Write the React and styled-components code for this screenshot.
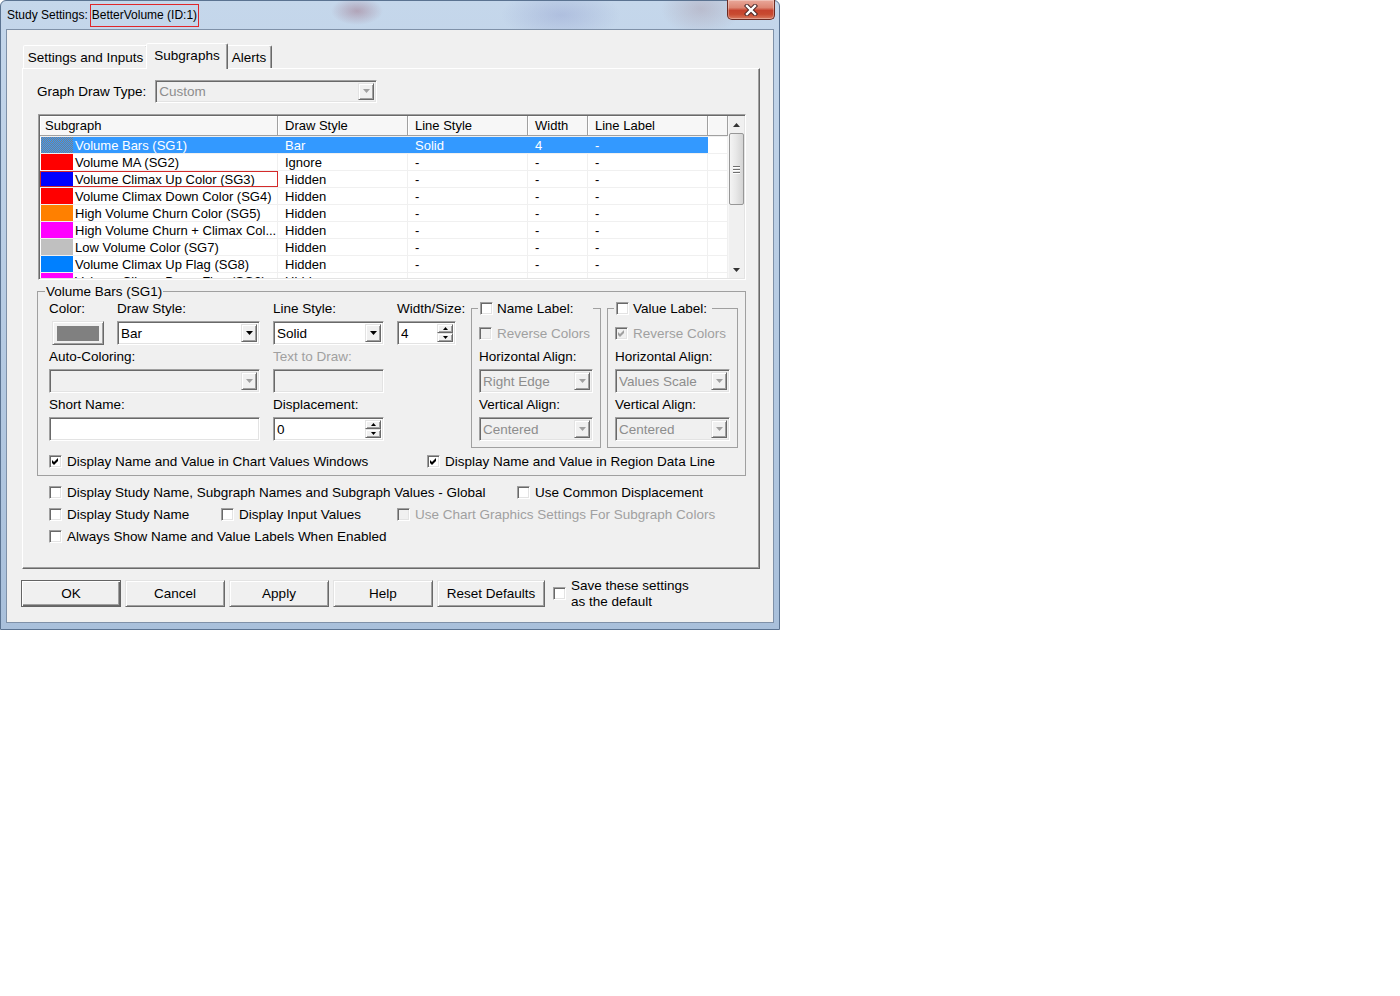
import React from "react";
import styled, { createGlobalStyle, css } from "styled-components";

const GlobalStyle = createGlobalStyle`
  html, body {
    margin: 0;
    padding: 0;
    background: #ffffff;
  }
  body {
    font-family: "Liberation Sans", Arial, sans-serif;
    font-size: 13.5px;
    color: #000;
  }
  *, *::before, *::after {
    box-sizing: border-box;
  }
`;

// classic 3d borders
const sunken = css`
  border: 1px solid;
  border-color: #a0a0a0 #ffffff #ffffff #a0a0a0;
  box-shadow: inset 1px 1px 0 #696969, inset -1px -1px 0 #e3e3e3;
`;

const raised = css`
  border: 1px solid;
  border-color: #e3e3e3 #696969 #696969 #e3e3e3;
  box-shadow: inset 1px 1px 0 #ffffff, inset -1px -1px 0 #a0a0a0;
`;

const Window = styled.div`
  width: 780px;
  height: 630px;
  display: flex;
  flex-direction: column;
  padding: 0 5px 6px 5px;
  border: 1px solid #5b7391;
  border-radius: 6px 6px 0 0;
  background:
    radial-gradient(ellipse 26px 14px at 356px 10px, rgba(140, 70, 90, 0.35), transparent),
    radial-gradient(ellipse 60px 26px at 560px 14px, rgba(110, 120, 185, 0.25), transparent),
    radial-gradient(ellipse 40px 26px at 700px 8px, rgba(150, 110, 120, 0.25), transparent),
    linear-gradient(180deg, #c5d7eb 0%, #b5cae2 55%, #a9c0db 100%);
`;

const TitleBar = styled.div`
  height: 28px;
  display: flex;
  align-items: center;
  padding-left: 1px;
  font-size: 12px;
`;

const TitleText = styled.span`
  white-space: nowrap;
`;

const TitleMark = styled.span`
  margin-left: 2px;
  height: 23px;
  line-height: 21px;
  padding: 0 1px;
  border: 1px solid #e0262a;
  white-space: nowrap;
`;

const CloseButton = styled.div`
  align-self: flex-start;
  margin: -1px -1px 0 auto;
  width: 48px;
  height: 20px;
  border: 1px solid #6b2a22;
  border-top: none;
  border-radius: 0 0 5px 5px;
  background: linear-gradient(180deg, #e9a89a 0%, #dd8673 40%, #c6432e 55%, #c84a30 75%, #d97a60 100%);
  box-shadow: inset 0 0 0 1px rgba(255, 255, 255, 0.3);
  display: flex;
  align-items: center;
  justify-content: center;
`;

const Client = styled.div`
  flex: 1;
  display: flex;
  flex-direction: column;
  background: #f0f0f0;
  border: 1px solid #7f91a8;
  padding: 13px 13px 0 15px;
`;

const TabRow = styled.div`
  display: flex;
  align-items: flex-end;
  height: 25px;
  margin-left: 1px;
`;

const Tab = styled.div`
  position: relative;
  z-index: ${(p) => (p.$active ? 1 : 0)};
  width: ${(p) => p.$w}px;
  height: ${(p) => (p.$active ? 26 : 23)}px;
  margin: ${(p) => (p.$active ? "0 -2px -1px -2px" : "0")};
  padding-bottom: ${(p) => (p.$active ? 2 : 0)}px;
  display: flex;
  align-items: center;
  justify-content: center;
  background: #f0f0f0;
  border: 1px solid;
  border-bottom: none;
  border-color: #ffffff #696969 transparent #ffffff;
  border-radius: 2px 2px 0 0;
  box-shadow: inset -1px 0 0 #a0a0a0;
  white-space: nowrap;
`;

const Panel = styled.div`
  height: 501px;
  display: flex;
  flex-direction: column;
  padding: 10px 0 0 14px;
  border: 1px solid;
  border-color: #ffffff #696969 #696969 #ffffff;
  box-shadow: inset -1px -1px 0 #a0a0a0;
`;

const DrawTypeRow = styled.div`
  display: flex;
  align-items: center;
  gap: 9px;
  height: 23px;
  padding-top: 1px;
`;

const Combo = styled.div`
  ${sunken};
  width: ${(p) => (p.$w ? `${p.$w}px` : "100%")};
  height: ${(p) => p.$h || 24}px;
  display: flex;
  align-items: stretch;
  padding: 2px 2px 2px 3px;
  background: ${(p) => (p.$disabled ? "#f0f0f0" : "#ffffff")};
  color: ${(p) => (p.$disabled ? "#8d8d8d" : "#000")};
`;

const ComboValue = styled.span`
  flex: 1;
  display: flex;
  align-items: center;
  white-space: nowrap;
  overflow: hidden;
`;

const ArrowButton = styled.div`
  ${raised};
  width: 16px;
  flex-shrink: 0;
  display: flex;
  align-items: center;
  justify-content: center;
  background: #f0f0f0;
`;

const SpinButtons = styled.div`
  width: 16px;
  flex-shrink: 0;
  display: flex;
  flex-direction: column;
`;

const SpinButton = styled.div`
  ${raised};
  flex: 1;
  display: flex;
  align-items: center;
  justify-content: center;
  background: #f0f0f0;
`;

const ListView = styled.div`
  ${sunken};
  margin: 12px 0 0 1px;
  width: 708px;
  height: 166px;
  padding: 1px;
  background: #ffffff;
  display: flex;
  overflow: hidden;
  font-size: 13px;
`;

const ListTable = styled.div`
  flex: 1;
  display: flex;
  flex-direction: column;
  overflow: hidden;
`;

const HeaderRow = styled.div`
  display: flex;
  height: 20px;
  flex-shrink: 0;
`;

const HeaderCell = styled.div`
  width: ${(p) => p.$w}px;
  flex-shrink: 0;
  display: flex;
  align-items: center;
  padding: 0 0 1px ${(p) => p.$pl ?? 7}px;
  background: #f7f7f7;
  border-right: 1px solid #a0a0a0;
  border-bottom: 1px solid #a0a0a0;
  box-shadow: inset 1px 1px 0 #ffffff;
  white-space: nowrap;
  overflow: hidden;
`;

const Row = styled.div`
  display: flex;
  height: 17px;
  flex-shrink: 0;
  border-top: 1px solid #f0f0f0;
`;

const NameCell = styled.div`
  width: 238px;
  flex-shrink: 0;
  display: flex;
  align-items: stretch;
  border-right: 1px solid ${(p) => (p.$sel ? "#3399ff" : "#f0f0f0")};
  outline: ${(p) => (p.$focus ? "1px solid #d42a2a" : "none")};
  outline-offset: -1px;
`;

const Swatch = styled.div`
  width: 32px;
  margin-left: 1px;
  flex-shrink: 0;
  background: ${(p) => p.$color};
`;

const selectedSwatch =
  "repeating-conic-gradient(#808080 0 25%, #3399ff 0 50%) 0 0 / 2px 2px";

const NameText = styled.div`
  flex: 1;
  display: flex;
  align-items: center;
  padding-left: 2px;
  white-space: nowrap;
  overflow: hidden;
  background: ${(p) => (p.$sel ? "#3399ff" : "transparent")};
  color: ${(p) => (p.$sel ? "#ffffff" : "#000")};
`;

const DataCell = styled.div`
  width: ${(p) => p.$w}px;
  flex-shrink: 0;
  display: flex;
  align-items: center;
  padding-left: 7px;
  border-right: 1px solid ${(p) => (p.$sel ? "#3399ff" : "#f0f0f0")};
  background: ${(p) => (p.$sel ? "#3399ff" : "transparent")};
  color: ${(p) => (p.$sel ? "#ffffff" : "#000")};
  white-space: nowrap;
  overflow: hidden;
`;

const ScrollBar = styled.div`
  width: 16px;
  flex-shrink: 0;
  display: flex;
  flex-direction: column;
  background: #f0f0f0;
  border-left: 1px solid #f7f7f7;
`;

const ScrollArrow = styled.div`
  height: 17px;
  flex-shrink: 0;
  display: flex;
  align-items: center;
  justify-content: center;
`;

const Thumb = styled.div`
  height: 72px;
  flex-shrink: 0;
  border: 1px solid #979797;
  border-radius: 2px;
  background: linear-gradient(90deg, #f4f4f4 0%, #e8e8e8 45%, #d4d4d4 100%);
  display: flex;
  flex-direction: column;
  align-items: center;
  justify-content: center;
  gap: 2px;
`;

const Grip = styled.div`
  width: 7px;
  height: 1px;
  background: #6f6f6f;
  box-shadow: 0 1px 0 #ffffff;
`;

const Track = styled.div`
  flex: 1;
`;

const GroupBox = styled.fieldset`
  margin: 4px 0 0 0;
  width: 709px;
  padding: 2px 7px 6px 11px;
  border: 1px solid #a0a0a0;
  min-inline-size: auto;
`;

const GroupLegend = styled.legend`
  margin-left: -4px;
  padding: 0 1px;
  height: 15px;
  line-height: 15px;
`;

const TopArea = styled.div`
  display: flex;
  align-items: flex-start;
`;

const FieldGrid = styled.div`
  display: grid;
  grid-template-columns: 55px 143px 111px 59px;
  column-gap: 13px;
  row-gap: 4px;
`;

const Field = styled.div`
  display: flex;
  flex-direction: column;
  gap: 5px;
  grid-column: ${(p) => p.$span || "auto"};
  margin-top: ${(p) => p.$mt || 0}px;
`;

const Label = styled.div`
  height: 15px;
  line-height: 16px;
  white-space: nowrap;
  color: ${(p) => (p.$disabled ? "#a0a0a0" : "#000")};
`;

const ColorButton = styled.div`
  ${raised};
  margin-left: 3px;
  width: 52px;
  height: 24px;
  padding: 4px 4px 3px 4px;
  background: #f0f0f0;
`;

const ColorFill = styled.div`
  width: 100%;
  height: 100%;
  background: ${(p) => p.$color};
`;

const Edit = styled.div`
  ${sunken};
  width: 100%;
  height: 24px;
  display: flex;
  align-items: stretch;
  padding: 2px 2px 2px 3px;
  background: ${(p) => (p.$disabled ? "#f0f0f0" : "#ffffff")};
`;

const SubGroup = styled.fieldset`
  margin: 0 0 0 ${(p) => p.$ml}px;
  width: ${(p) => p.$w}px;
  padding: 0 7px 6px 7px;
  border: 1px solid #a0a0a0;
  min-inline-size: auto;
  display: flex;
  flex-direction: column;
`;

const SubLegend = styled.legend`
  margin-left: -1px;
  padding: 0 ${(p) => p.$pr}px 0 2px;
  height: 15px;
  display: flex;
  align-items: center;
  gap: 4px;
  white-space: nowrap;
`;

const CheckItem = styled.div`
  display: flex;
  align-items: center;
  gap: 5px;
  height: 15px;
  flex-shrink: 0;
  width: ${(p) => (p.$w ? `${p.$w}px` : "auto")};
  margin-top: ${(p) => p.$mt || 0}px;
  margin-left: ${(p) => p.$ml || 0}px;
  color: ${(p) => (p.$disabled ? "#a0a0a0" : "#000")};
  white-space: nowrap;
`;

const Box = styled.div`
  ${sunken};
  width: 13px;
  height: 13px;
  flex-shrink: 0;
  display: flex;
  align-items: center;
  justify-content: center;
  background: ${(p) => (p.$disabled ? "#f0f0f0" : "#ffffff")};
`;

const CheckRow = styled.div`
  display: flex;
  align-items: center;
  height: ${(p) => p.$h || 15}px;
  margin-top: ${(p) => p.$mt || 0}px;
`;

const GlobalChecks = styled.div`
  margin-top: 5px;
  padding-left: 12px;
  display: flex;
  flex-direction: column;
`;

const ButtonRow = styled.div`
  margin: 11px 0 0 -1px;
  height: 27px;
  display: flex;
  align-items: center;
  gap: 4px;
`;

const Button = styled.div`
  width: ${(p) => p.$w || 100}px;
  height: 27px;
  display: flex;
  align-items: center;
  justify-content: center;
  background: #f0f0f0;
  border: 1px solid;
  ${(p) =>
    p.$default
      ? css`
          border-color: #646464;
          box-shadow: inset 1px 1px 0 #ffffff, inset -1px -1px 0 #696969, inset -2px -2px 0 #a0a0a0;
        `
      : css`
          border-color: #e3e3e3 #696969 #696969 #e3e3e3;
          box-shadow: inset 1px 1px 0 #ffffff, inset -1px -1px 0 #a0a0a0;
        `}
`;

const SaveText = styled.div`
  line-height: 16px;
  margin-left: 1px;
`;

const Triangle = ({ dir = "down", color = "#000", w = 7, h = 4 }) => (
  <svg width={w} height={h} viewBox={`0 0 ${w} ${h}`}>
    <polygon
      points={dir === "down" ? `0,0 ${w},0 ${w / 2},${h}` : `0,${h} ${w},${h} ${w / 2},0`}
      fill={color}
    />
  </svg>
);

const CheckMark = ({ color }) => (
  <svg width="9" height="9" viewBox="0 0 9 9">
    <polygon points="1,3 3,5 7,1 7,4 3,8 1,6" fill={color} />
  </svg>
);

const Check = ({ checked, disabled, w, mt, ml, children }) => (
  <CheckItem $w={w} $mt={mt} $ml={ml} $disabled={disabled}>
    <Box $disabled={disabled}>{checked && <CheckMark color={disabled ? "#a0a0a0" : "#000"} />}</Box>
    {children && <span>{children}</span>}
  </CheckItem>
);

const Dropdown = ({ value, disabled, w, h }) => (
  <Combo $w={w} $h={h} $disabled={disabled}>
    <ComboValue>{value}</ComboValue>
    <ArrowButton>
      <Triangle color={disabled ? "#a0a0a0" : "#000"} />
    </ArrowButton>
  </Combo>
);

const Spin = ({ value }) => (
  <Edit>
    <ComboValue>{value}</ComboValue>
    <SpinButtons>
      <SpinButton>
        <Triangle dir="up" w={5} h={3} />
      </SpinButton>
      <SpinButton>
        <Triangle w={5} h={3} />
      </SpinButton>
    </SpinButtons>
  </Edit>
);

const columns = [
  { title: "Subgraph", w: 238, pl: 5 },
  { title: "Draw Style", w: 130 },
  { title: "Line Style", w: 120 },
  { title: "Width", w: 60 },
  { title: "Line Label", w: 120 },
  { title: "", w: 20 },
];

const rows = [
  { name: "Volume Bars (SG1)", color: selectedSwatch, draw: "Bar", line: "Solid", width: "4", selected: true },
  { name: "Volume MA (SG2)", color: "#ff0000", draw: "Ignore" },
  { name: "Volume Climax Up Color (SG3)", color: "#0000ff", draw: "Hidden", focus: true },
  { name: "Volume Climax Down Color (SG4)", color: "#ff0000", draw: "Hidden" },
  { name: "High Volume Churn Color (SG5)", color: "#ff8000", draw: "Hidden" },
  { name: "High Volume Churn + Climax Col...", color: "#ff00ff", draw: "Hidden" },
  { name: "Low Volume Color (SG7)", color: "#c0c0c0", draw: "Hidden" },
  { name: "Volume Climax Up Flag (SG8)", color: "#0080ff", draw: "Hidden" },
  { name: "Volume Climax Down Flag (SG9)", color: "#ff00ff", draw: "Hidden" },
];

const LabelGroup = ({ title, pr, ml, w, reverseChecked, hAlign }) => (
  <SubGroup $ml={ml} $w={w}>
    <SubLegend $pr={pr}>
      <Box />
      <span>{title}</span>
    </SubLegend>
    <Check disabled checked={reverseChecked} mt={10}>
      Reverse Colors
    </Check>
    <Field $mt={8}>
      <Label>Horizontal Align:</Label>
      <Dropdown value={hAlign} disabled />
    </Field>
    <Field $mt={4}>
      <Label>Vertical Align:</Label>
      <Dropdown value="Centered" disabled />
    </Field>
  </SubGroup>
);

export default function App() {
  return (
    <>
      <GlobalStyle />
      <Window>
        <TitleBar>
          <TitleText>Study Settings:</TitleText>
          <TitleMark>BetterVolume (ID:1)</TitleMark>
          <CloseButton>
            <svg width="14" height="12" viewBox="0 0 14 12">
              <path d="M3 2 L11 10 M11 2 L3 10" stroke="#4a2626" strokeWidth="4.4" strokeLinecap="square" />
              <path d="M3 2 L11 10 M11 2 L3 10" stroke="#ffffff" strokeWidth="2.4" strokeLinecap="square" />
            </svg>
          </CloseButton>
        </TitleBar>
        <Client>
          <TabRow>
            <Tab $w={125}>Settings and Inputs</Tab>
            <Tab $w={82} $active>
              Subgraphs
            </Tab>
            <Tab $w={46}>Alerts</Tab>
          </TabRow>
          <Panel>
            <DrawTypeRow>
              <span>Graph Draw Type:</span>
              <Dropdown value="Custom" disabled w={222} h={23} />
            </DrawTypeRow>

            <ListView>
              <ListTable>
                <HeaderRow>
                  {columns.map((c, i) => (
                    <HeaderCell key={i} $w={c.w} $pl={c.pl}>
                      {c.title}
                    </HeaderCell>
                  ))}
                </HeaderRow>
                {rows.map((r) => (
                  <Row key={r.name}>
                    <NameCell $sel={r.selected} $focus={r.focus}>
                      <Swatch $color={r.color} />
                      <NameText $sel={r.selected}>{r.name}</NameText>
                    </NameCell>
                    <DataCell $w={130} $sel={r.selected}>
                      {r.draw}
                    </DataCell>
                    <DataCell $w={120} $sel={r.selected}>
                      {r.line || "-"}
                    </DataCell>
                    <DataCell $w={60} $sel={r.selected}>
                      {r.width || "-"}
                    </DataCell>
                    <DataCell $w={120} $sel={r.selected}>
                      -
                    </DataCell>
                    <DataCell $w={20} />
                  </Row>
                ))}
              </ListTable>
              <ScrollBar>
                <ScrollArrow>
                  <Triangle dir="up" color="#333" />
                </ScrollArrow>
                <Thumb>
                  <Grip />
                  <Grip />
                  <Grip />
                </Thumb>
                <Track />
                <ScrollArrow>
                  <Triangle color="#333" />
                </ScrollArrow>
              </ScrollBar>
            </ListView>

            <GroupBox>
              <GroupLegend>Volume Bars (SG1)</GroupLegend>
              <TopArea>
                <FieldGrid>
                  <Field>
                    <Label>Color:</Label>
                    <ColorButton>
                      <ColorFill $color="#808080" />
                    </ColorButton>
                  </Field>
                  <Field>
                    <Label>Draw Style:</Label>
                    <Dropdown value="Bar" />
                  </Field>
                  <Field>
                    <Label>Line Style:</Label>
                    <Dropdown value="Solid" />
                  </Field>
                  <Field>
                    <Label>Width/Size:</Label>
                    <Spin value="4" />
                  </Field>

                  <Field $span="1 / 3">
                    <Label>Auto-Coloring:</Label>
                    <Dropdown value="" disabled />
                  </Field>
                  <Field>
                    <Label $disabled>Text to Draw:</Label>
                    <Edit $disabled />
                  </Field>
                  <div />

                  <Field $span="1 / 3">
                    <Label>Short Name:</Label>
                    <Edit />
                  </Field>
                  <Field>
                    <Label>Displacement:</Label>
                    <Spin value="0" />
                  </Field>
                </FieldGrid>
                <LabelGroup title="Name Label:" pr={19} ml={15} w={130} hAlign="Right Edge" />
                <LabelGroup title="Value Label:" pr={5} ml={6} w={131} hAlign="Values Scale" reverseChecked />
              </TopArea>
              <CheckRow $mt={6}>
                <Check checked w={378}>
                  Display Name and Value in Chart Values Windows
                </Check>
                <Check checked>Display Name and Value in Region Data Line</Check>
              </CheckRow>
            </GroupBox>

            <GlobalChecks>
              <CheckRow $h={22}>
                <Check w={468}>Display Study Name, Subgraph Names and Subgraph Values - Global</Check>
                <Check>Use Common Displacement</Check>
              </CheckRow>
              <CheckRow $h={22}>
                <Check w={172}>Display Study Name</Check>
                <Check w={176}>Display Input Values</Check>
                <Check disabled>Use Chart Graphics Settings For Subgraph Colors</Check>
              </CheckRow>
              <CheckRow $h={22}>
                <Check>Always Show Name and Value Labels When Enabled</Check>
              </CheckRow>
            </GlobalChecks>
          </Panel>

          <ButtonRow>
            <Button $default>OK</Button>
            <Button>Cancel</Button>
            <Button>Apply</Button>
            <Button>Help</Button>
            <Button $w={108}>Reset Defaults</Button>
            <Check ml={4} />
            <SaveText>
              Save these settings
              <br />
              as the default
            </SaveText>
          </ButtonRow>
        </Client>
      </Window>
    </>
  );
}
